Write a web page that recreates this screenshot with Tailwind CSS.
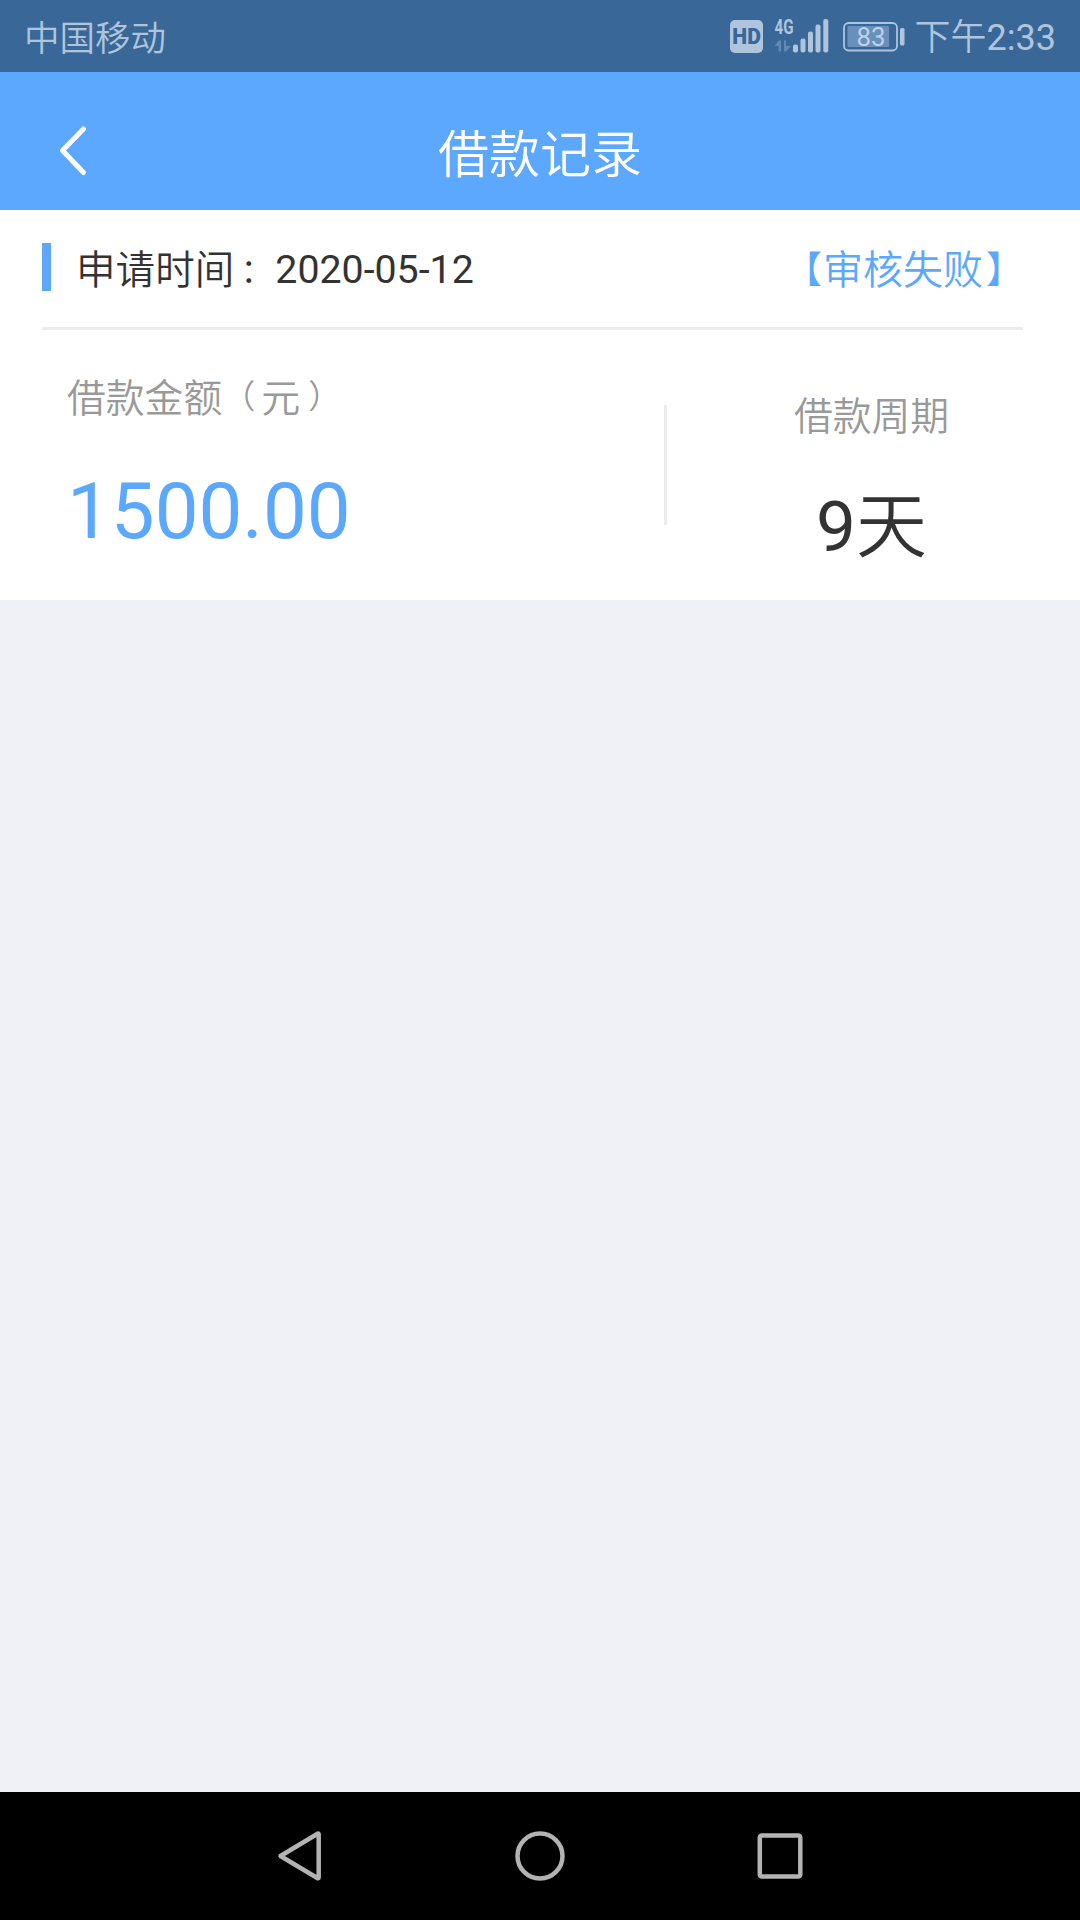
<!doctype html>
<html lang="zh-CN">
<head>
	<meta charset="utf-8"/>
	<meta name="viewport" content="width=device-width, initial-scale=1.0">
	<title>借款记录</title>
	<script src="https://cdn.jsdelivr.net/npm/@tailwindcss/browser@4"></script>
</head>
<body class="bg-[#f0f1f6] font-[Roboto,'Noto_Sans_CJK_SC',sans-serif]">
	<div class="w-[1080px] h-[1920px] flex flex-col overflow-hidden">

		<!-- status bar -->
		<div class="h-[72px] shrink-0 bg-[#386798] text-[#afc5dd] flex items-center pl-[24px] pr-[24px] text-[36px] leading-[68px] font-[350]">
			<span class="pt-[6px] text-[35.5px]">中国移动</span>
			<svg class="ml-auto" width="175" height="72" viewBox="730 0 175 72" fill="#afc5dd">
				<rect x="730" y="20" width="33" height="33" rx="5"/>
				<text x="732.3" y="44.3" font-family="Roboto" font-weight="900" font-size="21.5" textLength="28.5" lengthAdjust="spacingAndGlyphs" fill="#386798">HD</text>
				<text x="774.5" y="33.8" font-family="Roboto" font-weight="700" font-size="20" textLength="19" lengthAdjust="spacingAndGlyphs">4G</text>
				<path d="M774.500 46l4.500-5.500h2v11h-2.500v-5.500zM784 40.500h2v5.500h5l-5 5.500h-2z" fill="#6489b3"/>
				<rect x="793" y="44.500" width="5" height="8" rx="2"/>
				<rect x="800.500" y="38.500" width="5" height="14" rx="2"/>
				<rect x="808" y="31.500" width="5" height="21" rx="2"/>
				<rect x="815.500" y="24.500" width="5" height="28" rx="2"/>
				<rect x="823.300" y="19" width="5" height="33.500" rx="2"/>
				<rect x="844" y="23" width="53" height="27.500" rx="4.500" fill="none" stroke="#afc5dd" stroke-width="1.800"/>
				<rect x="847.500" y="26" width="41.500" height="21" rx="1" fill="#6a8fba"/>
				<rect x="900" y="28" width="4.500" height="17.500" rx="1.500"/>
				<text x="856.500" y="45.700" font-family="Roboto" font-weight="400" font-size="26" textLength="29" lengthAdjust="spacingAndGlyphs" fill="#bdd2ea">83</text>
			</svg>
			<span class="ml-[10px] pt-[4px]">下午<span class="font-normal">2:33</span></span>
		</div>

		<!-- title bar -->
		<div class="h-[138px] shrink-0 bg-[#5ca8ff] text-white flex items-center">
			<svg class="ml-[56px] mt-[18px]" width="34" height="54" viewBox="0 0 34 54" fill="none" stroke="#fff" stroke-width="5" stroke-linecap="round" stroke-linejoin="round">
				<path d="M27.500 6L6.500 27.500l21 22"/>
			</svg>
			<h1 class="flex-1 text-center pr-[90px] pt-[29px] text-[51px] leading-[60px] font-[350]">借款记录</h1>
		</div>

		<!-- record -->
		<div class="h-[390px] shrink-0 bg-white">
			<div class="ml-[42px] w-[981px] h-[120px] border-b-[3px] border-[#ececec] flex items-center text-[40px] leading-[60px] font-[350]">
				<div class="w-[9px] h-[48px] mb-[3px] bg-[#5ca8ff]"></div>
				<div class="ml-[25px] pt-[5px] flex text-[#333] whitespace-nowrap">
					<span class="text-[39.6px]">申请时间</span>
					<span class="w-[41px] pl-[6px] text-[34px]">：</span>
					<span class="text-[39.3px] font-normal -mt-[1px]">2020-05-12</span>
				</div>
				<div class="ml-auto pt-[5px] flex text-[#5ca8ff] whitespace-nowrap">
					<span class="text-[37px]">【</span>
					<span class="pl-[1px]">审核失败</span>
					<span class="w-[40px] pl-[3px] text-[37px]">】</span>
				</div>
			</div>
			<div class="h-[270px] flex">
				<div class="w-[664px] pl-[67px] pt-[39px]">
					<div class="flex text-[39px] leading-[60px] text-[#999] font-[350]">
						<span class="text-[38.8px]">借款金额</span>
						<span class="w-[39px] -mt-[2px] text-[33px]">（</span>
						<span>元</span>
						<span class="pl-[8px] -mt-[2px] text-[33px]">）</span>
					</div>
					<div class="mt-[37px] text-[78px] leading-[92px] text-[#5ca8ff]">1500.00</div>
				</div>
				<div class="mt-[75px] w-[3px] h-[120px] bg-[#ececec]"></div>
				<div class="w-[409px] pt-[57px] text-center">
					<div class="text-[38.8px] leading-[60px] text-[#999] font-[350]">借款周期</div>
					<div class="mt-[34px] text-[71px] leading-[92px] text-[#333]">9<span class="font-[350]">天</span></div>
				</div>
			</div>
		</div>

		<!-- navigation keys -->
		<div class="mt-auto h-[128px] shrink-0 bg-black flex items-center justify-between px-[270px]">
			<svg width="60" height="60" viewBox="0 0 60 60" fill="none" stroke="#b3b3b3" stroke-width="4.500" stroke-linejoin="round">
				<path d="M10.500 30L48 7.500Q48.700 7.500 48.700 9v42q0 1.500-1 1.300z"/>
			</svg>
			<svg width="60" height="60" viewBox="0 0 60 60" fill="none" stroke="#b3b3b3" stroke-width="4.500">
				<circle cx="30" cy="30" r="22.500"/>
			</svg>
			<svg width="60" height="60" viewBox="0 0 60 60" fill="none" stroke="#b3b3b3" stroke-width="4.500">
				<rect x="9.800" y="9.500" width="40.500" height="41" rx="2"/>
			</svg>
		</div>
	</div>
</body>
</html>
